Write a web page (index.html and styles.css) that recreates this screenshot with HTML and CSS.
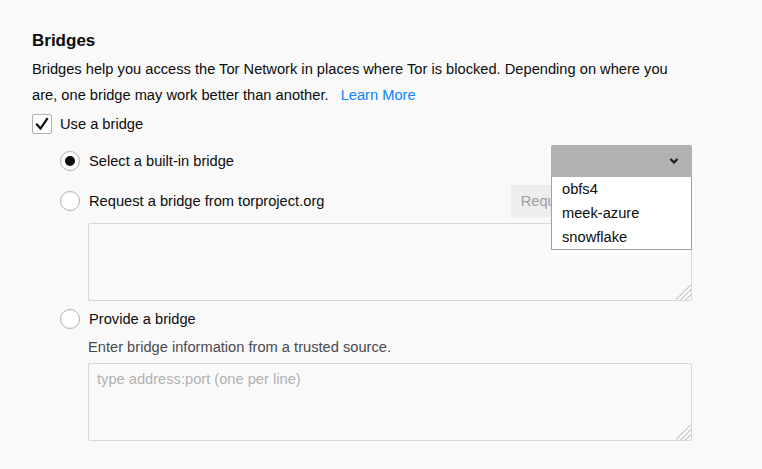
FILE: index.html
```html
<!DOCTYPE html>
<html>
<head>
<meta charset="utf-8">
<link rel="stylesheet" href="styles.css">
</head>
<body>
<div class="page">
  <h2 class="title">Bridges</h2>
  <p class="intro">Bridges help you access the Tor Network in places where Tor is blocked. Depending on where you are, one bridge may work better than another. <a class="link" href="#">Learn More</a></p>
  <div class="check-row">
    <span class="checkbox"><svg width="20" height="20" viewBox="0 0 20 20"><path d="M5 10.5 L8.5 14.5 L15 5" fill="none" stroke="#0c0c0d" stroke-width="2.2" stroke-linecap="square" stroke-linejoin="miter"/></svg></span>
    <span class="label">Use a bridge</span>
  </div>
  <div class="options">
    <div class="radio-row row-1">
      <span class="radio checked"><span class="dot"></span></span>
      <span class="label">Select a built-in bridge</span>
      <div class="select-wrap">
        <div class="select">
          <svg class="chev" width="10" height="8" viewBox="0 0 10 8"><path d="M1.5 2 L5 5.5 L8.5 2" fill="none" stroke="#1a1a1a" stroke-width="2.2"/></svg>
        </div>
        <ul class="popup">
          <li>obfs4</li>
          <li>meek-azure</li>
          <li>snowflake</li>
        </ul>
      </div>
    </div>
    <div class="radio-row row-2">
      <span class="radio"></span>
      <span class="label">Request a bridge from torproject.org</span>
      <button class="btn">Request a New Bridge…</button>
    </div>
    <textarea class="area area-1"></textarea>
    <div class="radio-row row-3">
      <span class="radio"></span>
      <span class="label">Provide a bridge</span>
    </div>
    <div class="desc">Enter bridge information from a trusted source.</div>
    <textarea class="area area-2" placeholder="type address:port (one per line)"></textarea>
  </div>
</div>
</body>
</html>
```
FILE: styles.css
```css
html, body {
  margin: 0;
  padding: 0;
  background: #f9f9f9;
}
body {
  font-family: "Liberation Sans", Arial, sans-serif;
  font-size: 11pt;
  color: #0c0c0d;
}
.page {
  width: 660px;
  padding: 29px 0 0 32px;
}
.title {
  margin: 0;
  font-size: 17px;
  line-height: 24px;
  font-weight: bold;
}
.intro {
  margin: 3px 0 0 0;
  line-height: 26px;
}
.link {
  color: #0a84ff;
  text-decoration: none;
  margin-left: 8px;
}
.check-row {
  display: flex;
  align-items: center;
  height: 20px;
  margin-top: 6px;
}
.checkbox {
  box-sizing: border-box;
  width: 20px;
  height: 20px;
  border: 1px solid #b1b1b3;
  border-radius: 2px;
  background: #fff;
  display: flex;
  align-items: center;
  justify-content: center;
}
.checkbox svg {
  margin: -1px;
}
.check-row .label {
  margin-left: 8px;
  line-height: 20px;
}
.options {
  margin-left: 28px;
}
.radio-row {
  display: flex;
  align-items: center;
}
.row-1 {
  margin-top: 11px;
  height: 32px;
}
.row-2 {
  margin-top: 8px;
  height: 32px;
}
.row-3 {
  margin-top: 8px;
  height: 20px;
}
.radio {
  box-sizing: border-box;
  width: 20px;
  height: 20px;
  border-radius: 50%;
  border: 1px solid #b1b1b3;
  background: #fff;
  display: flex;
  align-items: center;
  justify-content: center;
  flex: none;
}
.dot {
  width: 10px;
  height: 10px;
  border-radius: 50%;
  background: #0c0c0d;
}
.radio-row .label {
  margin-left: 9px;
  line-height: 20px;
}
.select-wrap {
  margin-left: auto;
  position: relative;
  width: 141px;
  height: 32px;
}
.select {
  height: 32px;
  background: #b1b1b3;
  border-radius: 2px 2px 0 0;
  position: relative;
}
.chev {
  position: absolute;
  left: 118px;
  top: 12px;
}
.popup {
  position: absolute;
  left: 0;
  top: 32px;
  box-sizing: border-box;
  width: 141px;
  margin: 0;
  padding: 0;
  list-style: none;
  background: #fff;
  border: 1px solid #a0a0a3;
  border-top: none;
  z-index: 5;
}
.popup li {
  height: 24px;
  line-height: 24px;
  padding-left: 10px;
  color: #0c0c0d;
}
.btn {
  margin-left: auto;
  height: 32px;
  padding: 0 10px;
  border: none;
  border-radius: 2px;
  background: #ededf0;
  color: #a0a0a3;
  font-family: inherit;
  font-size: 11pt;
  white-space: nowrap;
}
.area {
  display: block;
  box-sizing: border-box;
  width: 604px;
  height: 78px;
  margin: 6px 0 0 28px;
  border: 1px solid #d7d7db;
  border-radius: 2px;
  background: #fafafa;
  padding: 7px 8px;
  font-family: inherit;
  font-size: 11pt;
  resize: both;
}
.area::-webkit-resizer {
  background: linear-gradient(135deg,
    transparent 0 46%, #d2d2d5 46% 53%,
    transparent 53% 62%, #d2d2d5 62% 69%,
    transparent 69% 78%, #d2d2d5 78% 85%,
    transparent 85%);
}
.area::placeholder {
  color: #b1b1b3;
}
.desc {
  margin: 8px 0 0 28px;
  line-height: 20px;
  color: #4a4a4f;
}
```
